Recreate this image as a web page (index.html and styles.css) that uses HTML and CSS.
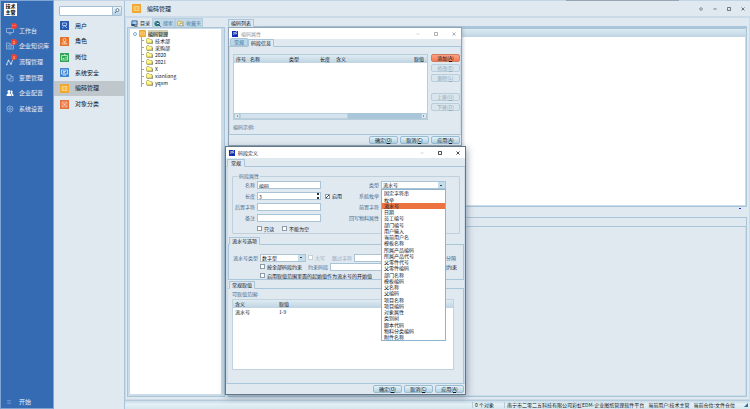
FILE: index.html
```html
<!DOCTYPE html>
<html lang="zh-CN">
<head>
<meta charset="utf-8">
<title>编码管理</title>
<link rel="stylesheet" href="styles.css">
</head>
<body>
<svg width="0" height="0" class="defs" aria-hidden="true">
  <symbol id="app" viewBox="0 0 12 12"><rect width="12" height="12" fill="#1535c4"/><path d="M1 1h8v2L6 5l3 4v2H7L5 7 2 11z" fill="#0a1f8f"/><path d="M2 4c3 0 5-1 8-3M5 5L3 8M6 6l4-1" stroke="#fff" stroke-width="1.500" fill="none"/></symbol>
  <symbol id="folder" viewBox="0 0 14 12"><path d="M1 10V3l1-2h4l1 2h5v7z" fill="#fff47c" stroke="#8c8426"/><path d="M2 4h9" stroke="#fffde0"/><path d="M2 11.500h11V5" stroke="#4c481c" fill="none"/></symbol>
  <symbol id="card" viewBox="0 0 18 18"><rect width="18" height="18" rx="1" fill="#f0a830"/><path d="M4 5h10v8H4zM4 8h10M6 10.500h2M10 10.500h2" stroke="#ffe6a8" stroke-width="1.300" fill="none"/></symbol>
</svg>
<div class="app">
  <nav class="side">
    <div class="logo"><span>技术</span><span>主管</span></div>
    <div class="side-list">
      <a href="#"><svg viewBox="0 0 16 16"><path d="M1 3h14v8H1zM8 11v3M5 14h6"/></svg>工作台<b class="badge">…</b></a>
      <a href="#"><svg viewBox="0 0 16 16"><path d="M1 2h5l2 2h7v10H1zM8 4v10M10 7h3M10 10h3M3 7h3M3 10h3"/></svg>企业知识库<b class="badge">1</b></a>
      <a href="#"><svg viewBox="0 0 16 16" class="bright"><path d="M1 13L5 5l5 7 4-9"/><circle cx="1.500" cy="13" r="1"/><circle cx="5" cy="5" r="1"/><circle cx="10" cy="12" r="1"/></svg>流程管理<b class="badge">1</b></a>
      <a href="#"><svg viewBox="0 0 16 16"><path d="M2 2h8v8H2zM10 5h4v9H6v-4"/></svg>变更管理</a>
      <a href="#"><svg viewBox="0 0 16 16" class="solid"><circle cx="6" cy="5" r="3"/><path d="M1 14c0-8 10-8 10 0zM10 3c4-1 4 4 2 5 2 1 3 3 3 6h-3c0-3-1-4-2-5z"/></svg>企业配置</a>
      <a href="#"><svg viewBox="0 0 16 16"><circle cx="8" cy="8" r="6"/><circle cx="8" cy="8" r="2.500"/></svg>系统设置</a>
    </div>
    <a href="#" class="start"><svg viewBox="0 0 16 16"><path d="M3 4h10M3 8h10M3 12h10"/></svg>开始</a>
  </nav>

  <aside class="menu">
    <form class="search"><input type="text" aria-label="搜索"><button type="button" aria-label="查找"><svg viewBox="0 0 14 14"><circle cx="8" cy="5" r="3.500" fill="#fff" stroke="#26415c" stroke-width="1.500"/><path d="M5.500 8L2 12" stroke="#26415c" stroke-width="2"/></svg></button></form>
    <div class="menu-list">
      <a href="#"><svg viewBox="0 0 18 18"><rect width="18" height="18" rx="1" fill="#2558ae"/><path d="M5 4h8v5H5zM9 9c-1 3-3 4-5 5M10 10l4 4" stroke="#c9dcff" stroke-width="1.500" fill="none"/></svg>用户</a>
      <a href="#"><svg viewBox="0 0 18 18"><rect width="18" height="18" rx="1" fill="#e5732b"/><circle cx="9" cy="6" r="3" stroke="#ffd9bd" stroke-width="1.500" fill="none"/><path d="M4 14c1-6 9-6 10 0zM9 10v4" stroke="#ffd9bd" stroke-width="1.500" fill="none"/></svg>角色</a>
      <a href="#"><svg viewBox="0 0 18 18"><rect width="18" height="18" rx="1" fill="#2fa555"/><path d="M3 5h12v9H3zM8 3h2v2" stroke="#d6f7df" stroke-width="1.500" fill="none"/><path d="M5 12c0-3 4-3 4 0zM11 8h2v3h-2z" fill="#d6f7df"/></svg>岗位</a>
      <a href="#"><svg viewBox="0 0 18 18"><rect width="18" height="18" rx="1" fill="#3f87d2"/><path d="M3 4h12v8H3zM6 14h6M6 7h6M6 9h4" stroke="#e1f0ff" stroke-width="1.500" fill="none"/></svg>系统安全</a>
      <a href="#" class="on"><svg><use href="#card"/></svg>编码管理</a>
      <a href="#"><svg viewBox="0 0 18 18"><rect width="18" height="18" rx="1" fill="#e8703a"/><path d="M4 4h10v10H4zM4 4l10 10M14 4L4 14" stroke="#ffd5c2" stroke-width="1.200" fill="none"/><circle cx="9" cy="9" r="2" fill="#ffd5c2"/></svg>对象分类</a>
    </div>
  </aside>

  <main class="main">
    <header class="head">
      <svg class="head-icon"><use href="#card"/></svg><h1>编码管理</h1>
      <div class="win-tools">
        <button type="button" aria-label="皮肤"><svg viewBox="0 0 8 8"><path d="M4 1l3 3-3 3-3-3z"/></svg></button>
        <button type="button" aria-label="最小化"><svg viewBox="0 0 8 8"><path d="M1 4h6"/></svg></button>
        <button type="button" aria-label="最大化"><svg viewBox="0 0 8 8"><path d="M1 1h6v6H1z"/></svg></button>
        <button type="button" aria-label="关闭"><svg viewBox="0 0 8 8"><path d="M1 1l6 6M7 1L1 7"/></svg></button>
      </div>
    </header>
    <div class="work">
      <section class="tree-pane">
        <div class="tree-tabs">
          <button type="button" class="on"><svg viewBox="0 0 16 16"><path d="M2 2h12v9H2z" fill="#a9cfec" stroke="#2a5c93" stroke-width="2"/><path d="M1 9h7v5H1z" fill="#294c70"/><path d="M7 14h8" stroke="#333" stroke-width="2"/></svg>目录</button>
          <button type="button"><svg viewBox="0 0 16 16"><circle cx="7" cy="8" r="6" fill="#257a76"/><path d="M3 4l5 2-3 5" fill="#6cc07d"/><circle cx="9" cy="8" r="3" fill="#dff" stroke="#173e79" stroke-width="2"/><path d="M11 11l4 4" stroke="#122858" stroke-width="2"/></svg>搜索</button>
          <button type="button"><svg viewBox="0 0 16 16"><path d="M1 13V4l2-2h4l1 2h6v9z" fill="#f8e28a" stroke="#998243"/><path d="M7 7l2 2 4-3-1 4 3 3H7z" fill="#fff" stroke="#5d7185"/></svg>收藏夹</button>
        </div>
        <div class="tree-body">
          <div class="root"><i class="toggle"></i><svg><use href="#card"/></svg><span>编码管理</span></div>
          <ul>
            <li><svg><use href="#folder"/></svg>技术部</li>
            <li><svg><use href="#folder"/></svg>采购部</li>
            <li><svg><use href="#folder"/></svg>2020</li>
            <li><svg><use href="#folder"/></svg>2021</li>
            <li><svg><use href="#folder"/></svg>X</li>
            <li><svg><use href="#folder"/></svg>xianliang</li>
            <li><svg><use href="#folder"/></svg>yqxm</li>
          </ul>
        </div>
      </section>
      <section class="content">
        <div class="tabs"><button type="button" class="on">编码列表</button></div>
        <div class="list"><div class="list-head"></div></div>
        <div class="split"><i></i></div>
        <div class="detail"><div class="detail-head"></div><div class="detail-body"></div></div>
      </section>
    </div>
    <footer class="status"><span class="count">0 个对象</span><span class="company">南宁市二零二五科技有限公司彩虹EDM-企业图纸管理软件平台</span><span>当前用户:技术主管</span><span>当前仓位:文件仓位</span><i class="grip"></i></footer>
  </main>
</div>

<section class="dialog attr">
  <header class="title"><svg><use href="#app"/></svg><h2>编码属性</h2>
    <div class="caption"><button type="button" class="dim" aria-label="最小化"><svg viewBox="0 0 8 8"><path d="M1 4h6"/></svg></button><button type="button" aria-label="最大化"><svg viewBox="0 0 8 8"><path d="M1 1h6v6H1z"/></svg></button><button type="button" aria-label="关闭"><svg viewBox="0 0 8 8"><path d="M1 1l6 6M7 1L1 7"/></svg></button></div>
  </header>
  <div class="tabs"><button type="button" class="wide">常规</button><button type="button" class="on">码段信息</button></div>
  <div class="attr-body">
    <div class="attr-row">
      <div class="grid-box">
        <table><thead><tr><th class="w14">序号</th><th class="w39">名称</th><th class="w31">类型</th><th class="w16">长度</th><th class="w78">含义</th><th>取值</th></tr></thead></table>
        <div class="scroll"><i class="left"></i><b></b><i class="right"></i></div>
      </div>
      <div class="actions"><button type="button" class="btn hot">添加(<u>A</u>)</button><button type="button" class="btn" disabled>修改(<u>E</u>)</button><button type="button" class="btn" disabled>删除(<u>L</u>)</button><button type="button" class="btn gap" disabled>上移(<u>U</u>)</button><button type="button" class="btn" disabled>下移(<u>D</u>)</button></div>
    </div>
    <p class="sample">编码示例:</p>
  </div>
  <footer class="foot"><button type="button" class="btn">确定(<u>O</u>)</button><button type="button" class="btn">取消(<u>C</u>)</button><button type="button" class="btn">应用(<u>A</u>)</button></footer>
</section>

<section class="dialog define">
  <header class="title"><svg><use href="#app"/></svg><h2>码段定义</h2>
    <div class="caption"><button type="button" class="dim" aria-label="最小化"><svg viewBox="0 0 8 8"><path d="M1 4h6"/></svg></button><button type="button" aria-label="最大化"><svg viewBox="0 0 8 8"><path d="M1 1h6v6H1z"/></svg></button><button type="button" aria-label="关闭"><svg viewBox="0 0 8 8"><path d="M1 1l6 6M7 1L1 7"/></svg></button></div>
  </header>
  <div class="tabs"><button type="button" class="on wide">常规</button></div>
  <div class="define-body">
    <fieldset class="props">
      <legend>码段属性</legend>
      <div class="fields">
        <label for="name">名称</label><input id="name" type="text" value="编码"><span></span>
        <label for="type">类型</label>
        <div class="combo"><select id="type"><option>流水号</option></select>
          <ul class="options" role="listbox" aria-label="类型">
            <li role="option">固定字符串</li><li role="option">枚举</li><li role="option" aria-selected="true">流水号</li><li role="option">日期</li><li role="option">员工编号</li><li role="option">部门编号</li><li role="option">用户输入</li><li role="option">当前用户名</li><li role="option">模板名称</li><li role="option">所属产品编码</li><li role="option">所属产品代号</li><li role="option">父零件代号</li><li role="option">父零件编码</li><li role="option">部门名称</li><li role="option">模板编码</li><li role="option">父名称</li><li role="option">父编码</li><li role="option">项目名称</li><li role="option">项目编码</li><li role="option">对象属性</li><li role="option">类别树</li><li role="option">脚本代码</li><li role="option">物料分类编码</li><li role="option">附件名称</li>
          </ul>
        </div>
        <label for="len">长度</label><div class="spin"><input id="len" type="text" value="3"><i></i></div><label class="check use"><input type="checkbox" checked>启用</label><label for="enum">系统枚举</label><input id="enum" type="text">
        <label for="suffix">后置字符</label><input id="suffix" type="text"><span></span><label for="prefix">前置字符</label><input id="prefix" type="text">
        <label for="note">备注</label><input id="note" type="text"><span></span><label for="back">回写物料属性</label><input id="back" type="text">
        <span></span><div class="pair"><label class="check"><input type="checkbox">只读</label><label class="check"><input type="checkbox">不能为空</label></div>
      </div>
    </fieldset>
    <div class="tabs"><button type="button" class="on">流水号选项</button></div>
    <div class="serial">
      <div class="line"><label for="kind">流水号类型</label><select id="kind" class="kind"><option>数字型</option></select><label class="check off"><input type="checkbox" disabled>大写</label><label for="skip" class="skip">跳过字符</label><input id="skip" type="text" class="grow"><span class="after">分隔</span></div>
      <div class="line inset"><label class="check"><input type="checkbox">按全部码段约束</label><label for="limit" class="limit">约束码段</label><input id="limit" type="text" class="grow"><span class="after dark">段约束</span></div>
      <div class="line inset"><label class="check"><input type="checkbox">启用取值范围里面的起始值作为流水号的开始值</label></div>
    </div>
    <div class="tabs"><button type="button" class="on">常规取值</button></div>
    <div class="values">
      <p>可取值范围:</p>
      <div class="value-box"><table><thead><tr><th class="w44">含义</th><th>取值</th></tr></thead><tbody><tr><td>流水号</td><td>1-9</td></tr></tbody></table></div>
    </div>
  </div>
  <footer class="foot"><button type="button" class="btn">确定(<u>O</u>)</button><button type="button" class="btn">取消(<u>C</u>)</button><button type="button" class="btn">应用(<u>A</u>)</button></footer>
</section>
</body>
</html>
```
FILE: styles.css
```css
:root {
  --face: #e0e8f0;
  --edge: #a9c5d9;
  --band: #cbdbe7;
  --label: #3f6c92;
  --ink: #0c141c;
}
* { box-sizing: border-box; margin: 0; padding: 0; }
body {
  height: 100vh;
  overflow: hidden;
  position: relative;
  font: 5px/6px "Noto Sans CJK SC", sans-serif;
  color: var(--ink);
  background: var(--face);
}
button, input, select { font: inherit; color: inherit; border: 0; background: none; outline: 0; appearance: none; }
a { color: inherit; text-decoration: none; }
ul { list-style: none; }
.defs { position: absolute; }
svg { display: block; flex: none; }
h1, h2 { font-weight: 400; font-size: 5px; line-height: 6px; }

.app { display: grid; grid-template-columns: 54px 71px minmax(0, 1fr); height: 100vh; }

/* primary navigation */
.side { display: flex; flex-direction: column; background: #356bb3; border: 1px solid #7fa5d3; color: #e6effb; font-size: 6px; line-height: 8px; padding: 2px 0 2px 3px; }
.logo { width: 13px; height: 13px; background: #fff; color: #000; font: 700 5px/6px "Noto Sans CJK SC", serif; text-align: center; }
.logo span { display: block; }
.side-list { display: grid; grid-auto-rows: 1fr; height: 94px; margin-top: 7px; }
.side a { display: flex; align-items: center; gap: 5px; position: relative; padding-left: 2px; }
.side svg { width: 8px; height: 8px; fill: none; stroke: #9dbfe8; stroke-width: 1.500; }
.side svg.bright { stroke: #e6effb; }
.side svg.solid { fill: #fff; stroke: none; }
.badge { position: absolute; left: 7px; top: 0; width: 6px; height: 6px; border-radius: 50%; background: #ee4238; color: #fff; font: 4px/6px "Noto Sans CJK SC", sans-serif; text-align: center; }
.start { margin-top: auto; }
.side .start svg { width: 6px; margin-right: 2px; stroke: #7fa8dc; }

/* secondary menu */
.menu { border-right: 1px solid var(--edge); padding-top: 5px; font-size: 6px; line-height: 8px; border-top: 1px solid #c3d5e4; }
.search { display: flex; margin: 0 2px 0 5px; height: 10px; border: 1px solid #a4bfd4; border-radius: 1px; background: #fff; }
.search input { flex: 1; min-width: 0; }
.search button { width: 9px; background: linear-gradient(#eef6fb, #b9d3e6); border-left: 1px solid #a4bfd4; padding: 1px; }
.search svg { width: 6px; height: 6px; }
.menu-list { display: grid; grid-auto-rows: 1fr; height: 94px; margin-top: 2px; }
.menu-list a { display: flex; align-items: center; gap: 6px; padding-left: 6px; }
.menu-list svg { width: 9px; height: 9px; }
.menu-list .on { background: #bfc6cc; }

/* workspace */
.main { display: flex; flex-direction: column; min-width: 0; border-top: 1px solid #c3d5e4; }
.head { height: 15px; display: flex; align-items: center; gap: 6px; padding: 0 5px 0 7px; }
.head::before { content: ""; position: absolute; top: 0; left: 75.500%; width: 15%; height: 1px; background: #98a5b3; }
.head-icon { width: 9px; height: 9px; }
.head h1 { font-size: 6px; line-height: 8px; }
.win-tools { margin-left: auto; display: flex; gap: 10px; }
.win-tools svg { width: 4px; height: 4px; fill: none; stroke: #4a5560; stroke-width: 1.500; }
.work { flex: 1; min-height: 0; display: grid; grid-template-columns: 98px minmax(0, 1fr); gap: 3px; padding: 0 2px 2px 1px; border: 1px solid var(--band); border-top-width: 2px; }
.tree-pane, .content { display: flex; flex-direction: column; min-width: 0; }
.tree-tabs { display: flex; height: 9px; padding-left: 2px; }
.tree-tabs button { display: flex; align-items: center; gap: 2px; padding: 0 1px; color: #41799e; background: #c3d9e8; border: 1px solid #b5cddd; border-bottom: 0; border-radius: 1px 1px 0 0; white-space: nowrap; }
.tree-tabs .on { background: var(--face); color: var(--ink); border-color: transparent; }
.tree-tabs svg { width: 7px; height: 7px; }
.tree-body { flex: 1; border: 3px solid var(--band); border-width: 2px 4px 3px 3px; outline: 1px solid var(--edge); outline-offset: -1px; background: #fff; padding: 1px 0 0 3px; }
.root { display: flex; align-items: center; gap: 2px; height: 7px; }
.root svg { width: 7px; height: 7px; }
.root span { background: #cfd0b4; line-height: 7px; }
.toggle { width: 4px; height: 4px; border: 1px solid #7eaed0; border-radius: 50%; }
.tree-body ul { margin-left: 8px; border-left: 1px solid #a3a3a3; height: 50px; display: grid; grid-auto-rows: 1fr; }
.tree-body li { display: flex; align-items: center; gap: 2px; }
.tree-body li::before { content: ""; width: 2px; height: 1px; background: #a3a3a3; }
.tree-body li svg { width: 7px; height: 6px; }

.tabs { display: flex; align-items: flex-end; height: 8px; padding-left: 1px; border-bottom: 1px solid var(--edge); flex: none; }
.tabs button { height: 8px; padding: 0 2px; line-height: 6px; color: #39739a; background: #bcd7e8; border: 1px solid var(--edge); border-radius: 1px 1px 0 0; white-space: nowrap; flex: none; }
.tabs .wide { padding: 0 3px; }
.tabs .on { color: var(--ink); background: var(--face); border-bottom-color: var(--face); margin-bottom: -1px; }
.content .tabs { padding: 0; height: 9px; }
.list { flex: 180 1 0; border: 2px solid var(--band); border-top-width: 1px; outline: 1px solid var(--edge); outline-offset: -1px; background: #fff; }
.list-head { height: 9px; background: linear-gradient(#dcebf3, #bfd4e2); border-top: 1px solid var(--edge); }
.split { height: 10px; display: flex; justify-content: flex-end; padding: 1px 6px; }
.split i { width: 2px; height: 1px; background: #2730d0; }
.detail { flex: 181 1 0; display: flex; flex-direction: column; border: 1px solid var(--edge); }
.detail-head { height: 9px; border-bottom: 1px solid var(--edge); }
.detail-body { flex: 1; border: solid var(--band); border-width: 0 1px 1px; }
.status { height: 9px; display: flex; align-items: center; gap: 4px; justify-content: flex-end; padding-right: 2px; background: linear-gradient(#cbdde8, #e4f1f5 40%, #d5e6ee); border-top: 1px solid #b6ccdc; white-space: nowrap; }
.count { width: 28px; border-left: 1px solid #b6ccdc; padding-left: 2px; }
.company { border-left: 1px solid #b6ccdc; padding-left: 2px; }
.grip { margin-left: 5px; border: 2px solid; border-color: transparent #356b99 #356b99 transparent; }

/* floating windows */
.dialog { position: absolute; display: flex; flex-direction: column; background: var(--face); border: 1px solid #8fa5b5; }
.attr { left: 228px; top: 27px; width: 234px; height: 119px; box-shadow: 1px 1px 3px #7f93a680; }
.define { left: 225px; top: 146px; width: 241px; height: 249px; border-color: #657786; box-shadow: 1px 2px 7px #53687b99; }
.title { display: flex; align-items: center; gap: 3px; height: 11px; background: #fff; padding: 0 5px 0 3px; flex: none; }
.title > svg { width: 6px; height: 6px; }
.attr .title { color: #8d959c; }
.caption { display: flex; gap: 14px; margin-left: auto; }
.caption svg { width: 4px; height: 4px; fill: none; stroke: currentColor; stroke-width: 1.500; }
.caption .dim { color: #c4c9ce; }
.define .tabs { height: 9px; }
.btn { height: 8px; width: 29px; flex: none; line-height: 6px; text-align: center; border: 1px solid #98bdd3; border-radius: 2px; background: linear-gradient(#e5f2f8, #b4d3e4); white-space: nowrap; }
.btn.hot { background: linear-gradient(#ffa184, #f57b50); border-color: #cf7d5e; }
.btn:disabled { color: #94a8b7; background: #d9e6ee; border-color: #b9cedc; }
.foot { display: flex; align-items: center; justify-content: flex-end; gap: 2px; height: 10px; padding-right: 1px; flex: none; }
table { width: 100%; border-collapse: collapse; table-layout: fixed; }
th { height: 8px; font-weight: 400; text-align: left; padding-left: 2px; background: linear-gradient(#deebf3, #bfd3e1); white-space: nowrap; }
td { height: 7px; padding-left: 2px; }
.w14 { width: 14px; }
.w16 { width: 16px; }
.w31 { width: 31px; }
.w39 { width: 39px; }
.w44 { width: 44px; }
.w78 { width: 78px; }

.attr-body { flex: 1; border: 1px solid var(--band); border-top: 0; border-bottom-color: var(--edge); padding: 7px 0 0 3px; }
.attr-row { display: flex; gap: 3px; height: 66px; }
.grid-box { flex: 1; display: flex; flex-direction: column; background: #fff; border: 1px solid #b9cddb; }
.scroll { display: flex; margin-top: auto; height: 6px; background: #a9c7d9; }
.scroll i { width: 6px; background: #dbe8f0; border: 1px solid #b3cadb; display: grid; place-items: center; }
.scroll i::before { content: ""; border: 1px solid transparent; border-right-color: #31526c; }
.scroll .right { margin-left: auto; }
.scroll .right::before { border-color: transparent transparent transparent #31526c; }
.scroll b { width: 56%; background: #d3e2ec; border: 1px solid #b9d0df; }
.actions { display: flex; flex-direction: column; gap: 2px; width: 29px; }
.actions .gap { margin-top: 9px; }
.sample { margin-top: 4px; color: #54728a; }

.define-body { flex: 1; display: flex; flex-direction: column; border: solid var(--band); border-width: 0 1px 1px 2px; border-bottom-color: var(--edge); }
.props { margin: 6px 4px 2px 4px; border: 1px solid #bfd0dc; border-radius: 1px; min-width: 0; height: 61px; }
.props legend { margin-left: 5px; padding: 0 1px; color: var(--label); }
.fields { display: grid; grid-template-columns: 22px 64px 22px minmax(0, 1fr) 65px; grid-template-rows: repeat(5, 1fr); column-gap: 2px; align-items: center; height: 54px; margin-right: 13px; margin-top: 1px; }
.fields > label:not(.check), .line > label:not(.check) { color: var(--label); text-align: right; white-space: nowrap; }
input[type="text"], select { height: 8px; min-width: 0; border: 1px solid #abc4d5; background: #fff; padding: 0 1px; line-height: 6px; }
.search input[type="text"] { border: 0; }
.combo { position: relative; height: 8px; }
.combo select { width: 100%; display: block; }
select { background: linear-gradient(#345, #345) right 3px center / 2px 1px no-repeat, linear-gradient(90deg, #c3ddeb, #c3ddeb) right / 7px 100% no-repeat, #fff; }
.options { position: absolute; z-index: 2; top: 8px; left: 0; right: 0; height: 152px; background: #fff; border: 1px solid #8fb3cc; display: grid; grid-auto-rows: 1fr; line-height: 6px; }
.options li { padding-left: 2px; }
.options [aria-selected] { background: #ed7242; }
.spin { display: flex; position: relative; }
.spin input { width: 100%; }
.spin i { position: absolute; right: 2px; top: 1px; width: 2px; height: 6px; background: linear-gradient(#234 2px, transparent 2px 4px, #234 4px); }
.check { display: flex; align-items: center; gap: 2px; white-space: nowrap; }
.check input { width: 5px; height: 5px; border: 1px solid #8e9ca8; background: #fff; flex: none; }
.check input:checked { background: linear-gradient(135deg, #fff 35%, #345 35% 65%, #fff 65%); }
.check.use { padding-left: 2px; }
.pair { display: flex; gap: 8px; grid-column: span 3; }
.serial { border: 1px solid var(--edge); border-width: 0 1px 1px; padding: 8px 6px 0 4px; height: 35px; }
.line { display: flex; align-items: center; gap: 2px; height: 9px; }
.kind { width: 46px; }
.off { color: #9cabb7; }
.off input { border-color: #c5d0d8; }
.line .skip { margin-left: 5px; color: #94aabc !important; }
.line .limit { margin-left: 4px; }
.inset { padding-left: 27px; }
.grow { flex: 1; }
.after { width: 11px; color: var(--label); white-space: nowrap; }
.after.dark { width: 15px; color: var(--ink); }
.values { flex: 1; padding: 2px 9px 13px 4px; display: flex; flex-direction: column; border-right: 1px solid var(--edge); }
.values p { color: var(--label); padding-bottom: 2px; }
.value-box { flex: 1; background: #fff; border: 1px solid #c2d2de; }
```
